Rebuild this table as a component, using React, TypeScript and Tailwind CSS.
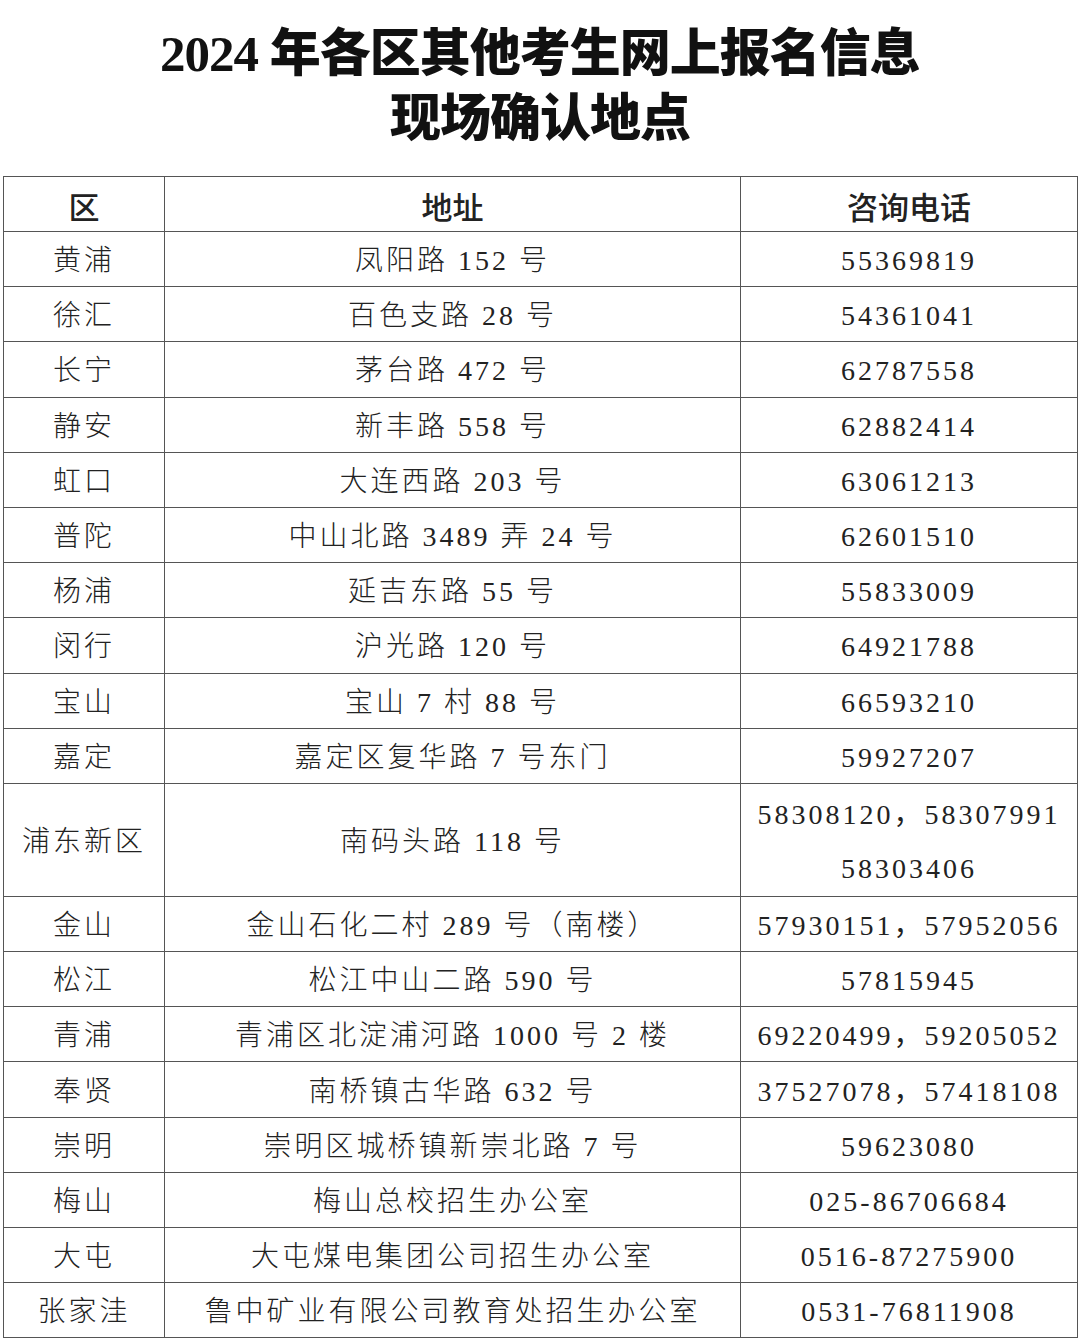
import React from 'react'

const rows: [string, string, string[]][] = [
  ['黄浦', '凤阳路 152 号', ['55369819']],
  ['徐汇', '百色支路 28 号', ['54361041']],
  ['长宁', '茅台路 472 号', ['62787558']],
  ['静安', '新丰路 558 号', ['62882414']],
  ['虹口', '大连西路 203 号', ['63061213']],
  ['普陀', '中山北路 3489 弄 24 号', ['62601510']],
  ['杨浦', '延吉东路 55 号', ['55833009']],
  ['闵行', '沪光路 120 号', ['64921788']],
  ['宝山', '宝山 7 村 88 号', ['66593210']],
  ['嘉定', '嘉定区复华路 7 号东门', ['59927207']],
  ['浦东新区', '南码头路 118 号', ['58308120，58307991', '58303406']],
  ['金山', '金山石化二村 289 号（南楼）', ['57930151，57952056']],
  ['松江', '松江中山二路 590 号', ['57815945']],
  ['青浦', '青浦区北淀浦河路 1000 号 2 楼', ['69220499，59205052']],
  ['奉贤', '南桥镇古华路 632 号', ['37527078，57418108']],
  ['崇明', '崇明区城桥镇新崇北路 7 号', ['59623080']],
  ['梅山', '梅山总校招生办公室', ['025-86706684']],
  ['大屯', '大屯煤电集团公司招生办公室', ['0516-87275900']],
  ['张家洼', '鲁中矿业有限公司教育处招生办公室', ['0531-76811908']],
]

const cell = 'border-[1.5px] border-[#555] text-center align-middle p-0 pt-[4px] leading-[40px]'
const head = { fontFamily: '"Noto Sans CJK SC", sans-serif', fontWeight: 500 }

export default function App() {
  return (
    <div
      className="w-[1080px] h-[1340px] bg-white text-[#222] overflow-hidden"
      style={{ fontFamily: '"Liberation Serif", "Noto Sans CJK SC", serif' }}
    >
      <div className="pt-[22px] h-[176px] text-center font-black text-[51px] leading-[65px] tracking-[-1px] text-[#111]">
        <div>2024 年各区其他考生网上报名信息</div>
        <div>现场确认地点</div>
      </div>
      <table className="ml-[3px] w-[1074px] table-fixed border-collapse">
        <colgroup>
          <col className="w-[161px]" />
          <col className="w-[576px]" />
          <col className="w-[337px]" />
        </colgroup>
        <thead>
          <tr className="h-[55px] text-[31px]">
            <th className={cell} style={head}>区</th>
            <th className={cell} style={head}>地址</th>
            <th className={cell} style={head}>咨询电话</th>
          </tr>
        </thead>
        <tbody className="text-[28px] tracking-[3px]">
          {rows.map(([d, addr, phones]) => (
            <tr key={d} className={phones.length > 1 ? 'h-[110.4px]' : 'h-[55.2px]'}>
              <td className={cell + ' font-light'}>{d}</td>
              <td className={cell + ' font-light'}>{addr}</td>
              <td className={cell}>
                {phones.map((p) => (
                  <div key={p} className={phones.length > 1 ? 'leading-[54px]' : 'leading-[40px]'}>
                    {p}
                  </div>
                ))}
              </td>
            </tr>
          ))}
        </tbody>
      </table>
    </div>
  )
}
